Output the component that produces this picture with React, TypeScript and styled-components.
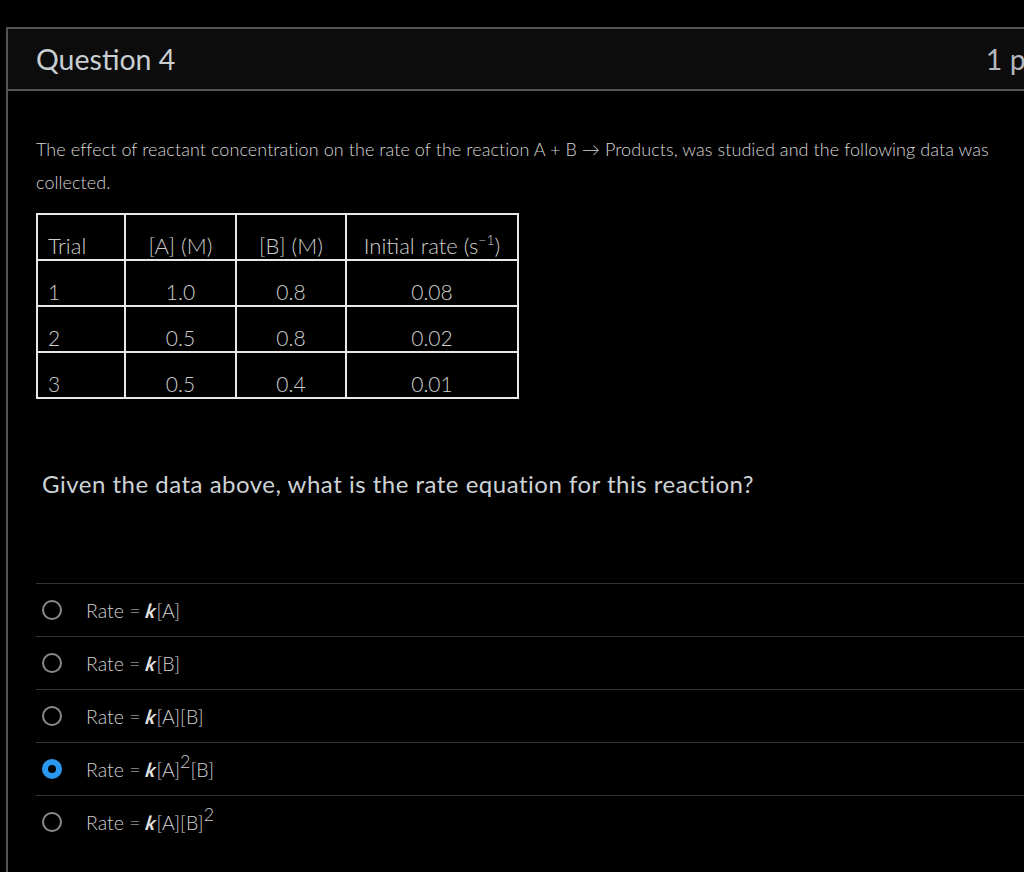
import React from 'react'
import styled, { createGlobalStyle } from 'styled-components'

const GlobalStyle = createGlobalStyle`
  body {
    margin: 0;
    background: #000;
    overflow: hidden;
    font-family: Lato, "Open Sans", sans-serif;
  }
`

const Page = styled.div`
  width: 1024px;
  height: 872px;
  overflow: hidden;
  padding: 27px 0 0 6px;
  box-sizing: border-box;
`

const Card = styled.div`
  width: 1068px;
  border: 2px solid #545454;
  border-bottom: none;
  background: #000;
  min-height: 900px;
`

const Header = styled.div`
  display: flex;
  justify-content: space-between;
  align-items: center;
  height: 60px;
  padding: 0 28px;
  background: #0c0c0c;
  border-bottom: 2px solid #545454;
  color: #c9ced2;
  font-size: 28.5px;
`

const Points = styled.span`
  color: #b4b8bc;
`

const Body = styled.div`
  padding: 42px 28px 0 28px;
`

const Paragraph = styled.p`
  margin: 0;
  font-size: 18px;
  font-weight: 300;
  line-height: 33px;
  letter-spacing: 0.07px;
  color: #d6d6d6;
`

const DataTable = styled.table`
  margin-top: 14px;
  border-collapse: collapse;
  border: 2px solid #e8e8e8;
  font-weight: 300;
  color: #cfcfcf;
`

const Cell = styled.td<{ $w: number; $left?: boolean; $head?: boolean }>`
  width: ${({ $w }) => $w}px;
  height: 46px;
  border: 2px solid #e8e8e8;
  vertical-align: bottom;
  padding: 0 10px 0 10px;
  box-sizing: border-box;
  text-align: ${({ $left }) => ($left ? 'left' : 'center')};
  font-size: ${({ $head }) => ($head ? '22px' : '21px')};
  line-height: 26px;
`

const Sup = styled.sup`
  font-size: 14px;
  line-height: 0;
  vertical-align: 9px;
`

const Prompt = styled.p`
  margin: 70px 0 0 6px;
  font-size: 24px;
  line-height: 29px;
  color: #cdd2d6;
  letter-spacing: 0.5px;
`

const Options = styled.ul`
  list-style: none;
  margin: 85px 0 0 0;
  padding: 0;
`

const Option = styled.li`
  display: flex;
  align-items: center;
  height: 52px;
  border-top: 1px solid #333;
  font-size: 19.5px;
  font-weight: 300;
  color: #cfcfcf;
`

const Radio = styled.span<{ $checked?: boolean }>`
  width: 20px;
  height: 20px;
  margin: 0 24px 0 6px;
  border-radius: 50%;
  box-sizing: border-box;
  border: ${({ $checked }) => ($checked ? '6px solid #2b98f0' : '2px solid #8a8a8a')};
  background: #000;
  flex-shrink: 0;
`

const K = styled.i`
  display: inline-block;
  font-style: italic;
  font-weight: 700;
  color: #e4e4e4;
  transform: skewX(-10deg);
  margin-right: 1px;
`

const OptSup = styled.sup`
  font-size: 18px;
  line-height: 0;
  vertical-align: 9px;
`

const rows = [
  ['1', '1.0', '0.8', '0.08'],
  ['2', '0.5', '0.8', '0.02'],
  ['3', '0.5', '0.4', '0.01'],
]
const widths = [88, 111, 110, 172]

const options: React.ReactNode[] = [
  <>Rate = <K>k</K>[A]</>,
  <>Rate = <K>k</K>[B]</>,
  <>Rate = <K>k</K>[A][B]</>,
  <>Rate = <K>k</K>[A]<OptSup>2</OptSup>[B]</>,
  <>Rate = <K>k</K>[A][B]<OptSup>2</OptSup></>,
]

export default function App() {
  return (
    <Page>
      <GlobalStyle />
      <Card>
        <Header>
          <span>Question 4</span>
          <Points>1 pts</Points>
        </Header>
        <Body>
          <Paragraph>
            The effect of reactant concentration on the rate of the reaction A + B → Products, was studied and the following data was collected.
          </Paragraph>
          <DataTable>
            <tbody>
              <tr>
                <Cell $w={widths[0]} $left $head>Trial</Cell>
                <Cell $w={widths[1]} $head>[A] (M)</Cell>
                <Cell $w={widths[2]} $head>[B] (M)</Cell>
                <Cell $w={widths[3]} $head>Initial rate (s<Sup>−1</Sup>)</Cell>
              </tr>
              {rows.map(r => (
                <tr key={r[0]}>
                  {r.map((v, i) => (
                    <Cell key={i} $w={widths[i]} $left={i === 0}>{v}</Cell>
                  ))}
                </tr>
              ))}
            </tbody>
          </DataTable>
          <Prompt>Given the data above, what is the rate equation for this reaction?</Prompt>
          <Options>
            {options.map((o, i) => (
              <Option key={i}>
                <Radio $checked={i === 3} />
                <span>{o}</span>
              </Option>
            ))}
          </Options>
        </Body>
      </Card>
    </Page>
  )
}
